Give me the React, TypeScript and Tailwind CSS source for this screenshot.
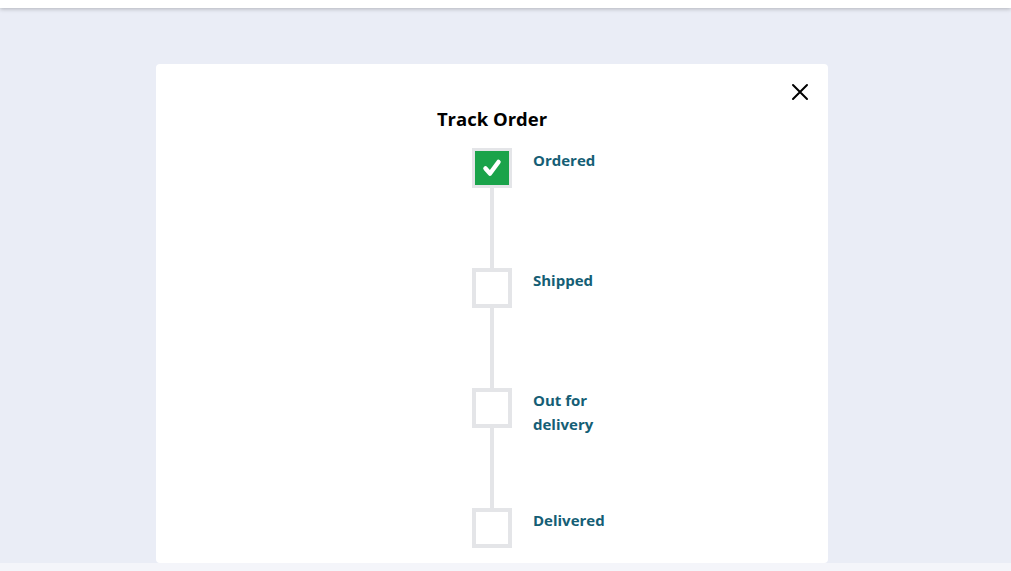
import React from "react";

const steps = [
  { label: "Ordered", done: true },
  { label: "Shipped", done: false },
  { label: "Out for delivery", done: false },
  { label: "Delivered", done: false },
];

export default function App() {
  return (
    <div
      className="w-[1011px] h-[571px] overflow-hidden bg-[#eaedf6] flex flex-col"
      style={{ fontFamily: '"Open Sans", "Noto Sans", sans-serif' }}
    >
      <div className="h-[8px] bg-white shadow-[0_1px_4px_rgba(0,0,0,0.25)] relative z-10 shrink-0" />
      <div className="flex-1 flex justify-center pt-[56px] pr-[27px]">
        <div className="w-[672px] h-[499px] bg-white rounded-[4px] relative flex flex-col items-center">
          <button className="absolute right-[19px] top-[19px] w-[18px] h-[18px] flex items-center justify-center">
            <svg width="18" height="18" viewBox="0 0 18 18" fill="none" stroke="#000" strokeWidth="2" strokeLinecap="round">
              <path d="M2 2L16 16M16 2L2 16" />
            </svg>
          </button>
          <h2 className="mt-[41px] text-[18.5px] leading-[28px] font-bold text-black">Track Order</h2>
          <div className="mt-[15px] w-full grid grid-cols-[1fr_40px_1fr]">
            {steps.map((s, i) => (
              <React.Fragment key={s.label}>
                <div />
                <div className="flex flex-col items-center">
                  <div
                    className={`w-[40px] h-[40px] border-[#e4e5e8] flex items-center justify-center ${
                      s.done ? "bg-[#1aa34a] border-[3px]" : "bg-white border-[4px]"
                    }`}
                  >
                    {s.done && (
                      <svg width="22" height="22" viewBox="0 0 22 22" fill="none" stroke="#fff" strokeWidth="4.5" strokeLinecap="round" strokeLinejoin="round">
                        <path d="M4.5 11.5L9 16.5L17.5 5" />
                      </svg>
                    )}
                  </div>
                  {i < steps.length - 1 && <div className="w-[4px] h-[80px] bg-[#e4e5e8]" />}
                </div>
                <div className="pl-[21px]">
                  <div className="w-[100px] text-[15px] leading-[24px] font-bold text-[#155e75]">{s.label}</div>
                </div>
              </React.Fragment>
            ))}
          </div>
        </div>
      </div>
      <div className="h-[8px] bg-[#f4f5fa] shrink-0" />
    </div>
  );
}
